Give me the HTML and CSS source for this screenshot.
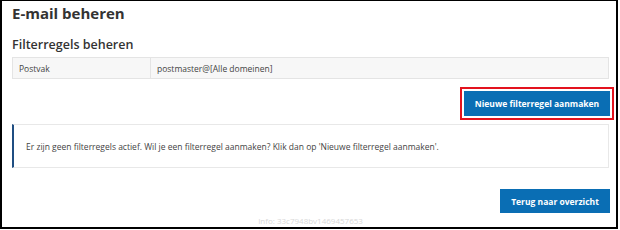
FILE: index.html
```html
<!DOCTYPE html>
<html lang="nl">
<head>
    <meta charset="UTF-8">
    <title>E-mail beheren</title>
    <link rel="stylesheet" href="styles.css">
</head>
<body>
    <div class="frame">
        <h1 class="page-title">E-mail beheren</h1>
        <h2 class="section-title">Filterregels beheren</h2>
        <table class="info-table">
            <tr>
                <td class="label">Postvak</td>
                <td>postmaster@[Alle domeinen]</td>
            </tr>
        </table>
        <div class="actions">
            <button class="btn highlighted">Nieuwe filterregel aanmaken</button>
        </div>
        <div class="notice">
            Er zijn geen filterregels actief. Wil je een filterregel aanmaken? Klik dan op 'Nieuwe filterregel aanmaken'.
        </div>
        <div class="actions bottom">
            <button class="btn back">Terug naar overzicht</button>
        </div>
        <div class="footer-info">Info: 33c7948bv1469457653</div>
    </div>
</body>
</html>
```
FILE: styles.css
```css
body {
    margin: 0;
    background: #fff;
    font-family: 'Open Sans', Arial, sans-serif;
    color: #333;
}
.frame {
    width: 618px;
    height: 229px;
    box-sizing: border-box;
    border: 2px solid #000;
    border-top-width: 1px;
    padding: 0 7px 0 10px;
}
.page-title {
    font-size: 15px;
    line-height: 20px;
    font-weight: 700;
    margin: 2px 0 0 0;
    color: #333;
}
.section-title {
    font-size: 12.5px;
    line-height: 17px;
    font-weight: 600;
    margin: 13px 0 0 0;
    color: #333;
}
.info-table {
    width: 100%;
    margin-top: 4px;
    border-collapse: collapse;
    background: #f7f7f7;
    font-size: 8.5px;
    color: #444;
}
.info-table td {
    border: 1px solid #e4e4e4;
    height: 21px;
    padding: 0 6px;
    box-sizing: border-box;
}
.info-table td.label {
    width: 138px;
}
.actions {
    display: flex;
    justify-content: flex-end;
    margin-top: 12px;
}
.btn {
    background: #0a6eb4;
    color: #fff;
    border: none;
    border-radius: 0;
    font-family: 'Open Sans', Arial, sans-serif;
    font-weight: 700;
    font-size: 8.5px;
    height: 25px;
    padding: 0;
    white-space: nowrap;
    cursor: pointer;
}
.highlighted {
    width: 146px;
    margin-right: -1px;
    outline: 2px solid #e3131e;
    outline-offset: 2px;
}
.back {
    width: 110px;
    height: 24px;
    margin-right: -1px;
}
.notice {
    margin-top: 8px;
    height: 44px;
    box-sizing: border-box;
    border: 1px solid #e8e8e8;
    border-left: 2px solid #1f4e82;
    padding: 0 12px;
    display: flex;
    align-items: center;
    font-size: 8.5px;
    color: #444;
}
.actions.bottom {
    margin-top: 21px;
}
.footer-info {
    text-align: center;
    font-size: 8px;
    color: #d8d8d8;
    margin-top: 2px;
}
```
